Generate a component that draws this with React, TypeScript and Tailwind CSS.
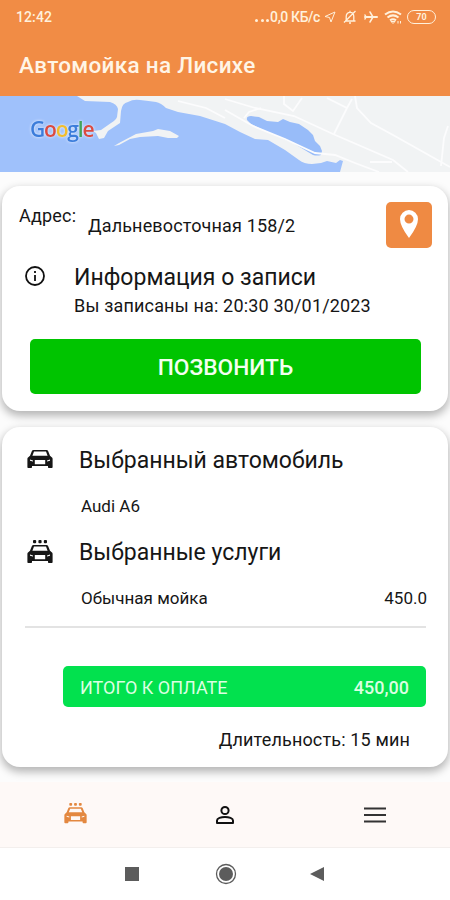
import type { ReactNode } from 'react'

interface CarProps {
  className?: string
  wash?: boolean
}

function CarIcon({ className, wash = false }: CarProps) {
  return (
    <svg viewBox="0 0 26 26" className={className} fill="currentColor">
      {wash && (
        <>
          <rect x="6" y="1" width="3.200" height="3.200" rx="1" />
          <rect x="11.400" y="1" width="3.200" height="3.200" rx="1" />
          <rect x="16.800" y="1" width="3.200" height="3.200" rx="1" />
        </>
      )}
      <path
        fillRule="evenodd"
        d="M6.600 6h12.800c.9 0 1.500.4 1.800 1.200L23 11.700l2 1.800c.4.4.6.8.6 1.400V23c0 .6-.4 1-1 1h-2.600c-.6 0-1-.4-1-1v-1H5v1c0 .6-.4 1-1 1H1.400c-.6 0-1-.4-1-1v-8.100c0-.6.2-1 .6-1.400l2-1.800 1.800-4.500C5.100 6.400 5.700 6 6.600 6zM7 7.500 5.400 11.700h15.200L19 7.500zM3 15.500v1.300l3 .7v-1.100zm20 0-3 .9v1.100l3-.7zM7.800 16v4.300h10.400V16z"
      />
    </svg>
  )
}

function StatusBar() {
  return (
    <div className="flex h-[34px] items-center justify-between pl-4 pr-[14px] text-[14px] font-medium text-[#fff1dc]">
      <span className="tracking-[0.1px]">12:42</span>
      <div className="flex items-center">
        <span className="mr-[1px] flex gap-[2.500px] pt-[7px]">
          <i className="size-[3px] rounded-full bg-current" />
          <i className="size-[3px] rounded-full bg-current" />
          <i className="size-[3px] rounded-full bg-current" />
        </span>
        <span className="text-[14px] tracking-[-0.4px]">0,0 КБ/с</span>
        <svg viewBox="0 0 12 12" className="ml-1 size-3" fill="none" stroke="currentColor" strokeWidth="1">
          <path d="M1 5.500 11 1 7 11 5.500 6.500z" strokeLinejoin="round" />
        </svg>
        <svg viewBox="0 0 14 14" className="ml-[7px] size-[14px]" fill="none" stroke="currentColor" strokeWidth="1.300">
          <path d="M2 11h10.500M3.200 11V6.500C3.200 4 4.800 2.300 7 2.300S10.800 4 10.800 6.500V11M6 13h2M7 .8v1.500M1 12.500 12.500 1" />
        </svg>
        <svg viewBox="0 0 16 14" className="ml-[6px] h-[14px] w-4" fill="none" stroke="currentColor" strokeWidth="2" strokeLinecap="round">
          <path d="M2 7h12" />
          <path d="m7 2 3 5-3 5M2 5l1 2-1 2" strokeWidth="1.500" />
        </svg>
        <svg viewBox="0 0 18 14" className="ml-[5px] h-[14px] w-[18px]" fill="none" stroke="currentColor" strokeWidth="2.100">
          <path d="M1 4.500q8-6 16 0M3.500 7.500q5.500-4.200 11 0M6 10.300q3-2.200 6 0" />
          <path d="m9 13.500 2-2H7zM14 11v2.500M16.500 11v2.500" strokeWidth="1" />
        </svg>
        <span className="ml-[5px] flex h-[14px] w-[29px] items-center justify-center rounded-full border border-[#fff1dc] text-[9px] font-bold leading-none">
          70
        </span>
      </div>
    </div>
  )
}

const googleLetters = [
  { char: 'G', color: 'text-[#3c7ddb]' },
  { char: 'o', color: 'text-[#dc4a40]' },
  { char: 'o', color: 'text-[#f2bd2c]' },
  { char: 'g', color: 'text-[#3c7ddb]' },
  { char: 'l', color: 'text-[#42a45b]' },
  { char: 'e', color: 'text-[#dc4a40]' },
]

function MapPreview() {
  return (
    <div className="relative h-[76px]">
      <svg viewBox="0 0 450 76" className="block h-[76px] w-[450px]">
        <rect width="450" height="76" fill="#f1f3f4" />
        <path
          fill="#9fc1fb"
          d="M0 0h77l8 5 25 1q7 2 8 7l-1 8q-1 3-6 6l-10 7-8 1 3 2 3 6 5-1 4-7 12-8 1-12q1-8 7-9 5-3 12-2 9 1 16 2 5 1 10 6l12 4 22 4 25 8 15 8 15 7 13 1 17 10 14 10q5 4 13 4l9-1 6-2 9 2 4-3 3 1-3 11H0z"
        />
        <path
          fill="#f1f3f4"
          d="m114 50 5-3 17-9 17-3 5-2 12 2 9 5-2 2h-9l-10-2-18 1-10 2-11 6z"
        />
        <path
          fill="#98bcf9"
          d="M247 24q-1-4 4-4l8 1 8 4 11 1 5-3 7 3 9 2 9 6 5 5 2 6 5 5 2 5-1 4q-4 1-8 0l-20-12-25-11-17-8z"
        />
        <g fill="none" stroke="#fcfcfd" strokeWidth="1.800">
          <path d="M178 5l28 7 19 10M225 3l30 9 39 8 39 18 60 26 15 12" />
          <path d="m225 14 28 16 32 13 30 14 20 2 20 8 24 9M244 22l5-6 12-4M355 0l2 12 14 15 22 12 57 32" />
          <path d="M284 0v8l9 7 9-13M327 2l20 10 5-9M347 12l-13 26M448 30l-4 12-3 28M370 66h22" />
        </g>
      </svg>
      <span className="absolute left-[30px] top-[20px] font-['Open_Sans',sans-serif] text-[21px] font-semibold leading-[26px] tracking-[-1.2px] drop-shadow-[0_0_1.500px_#f4f8ff]">
        {googleLetters.map((letter, index) => (
          <span key={index} className={letter.color}>{letter.char}</span>
        ))}
      </span>
    </div>
  )
}

function Card({ className, children }: { className: string; children: ReactNode }) {
  return (
    <section className={`mx-[2px] shrink-0 rounded-[18px] bg-white shadow-[0_4px_9px_1px_rgba(0,0,0,0.28)] ${className}`}>
      {children}
    </section>
  )
}

function BookingCard() {
  return (
    <Card className="mt-[14px] h-[225px]">
      <div className="flex h-[67px] pl-[17px] pr-[16px]">
        <span className="mt-[18px] w-[69px] text-[18px] leading-6 tracking-[0.2px]">Адрес:</span>
        <span className="mt-[28px] flex-1 whitespace-nowrap text-[18px] leading-6 tracking-[0.15px]">Дальневосточная 158/2</span>
        <button className="mt-[16px] flex size-[46px] items-center justify-center rounded-[5px] bg-[#ef8a43]">
          <svg viewBox="0 0 18 28" className="-mt-[2px] h-[28px] w-[18px]">
            <path fill="#fff" fillRule="evenodd" d="M9 0a9 9 0 0 0-9 9q0 7 9 19 9-12 9-19a9 9 0 0 0-9-9zm0 4.600a4.500 4.500 0 1 1 0 9 4.500 4.500 0 0 1 0-9z" />
          </svg>
        </button>
      </div>
      <div className="flex pl-[23px] pt-[9px]">
        <svg viewBox="0 0 20 20" className="mt-[4px] size-5" fill="none" stroke="#111" strokeWidth="1.800">
          <circle cx="10" cy="10" r="9" />
          <path d="M10 9v6M10 5v2" />
        </svg>
        <div className="ml-[29px] whitespace-nowrap">
          <h2 className="pt-px text-[23px] leading-[30px]">Информация о записи</h2>
          <p className="text-[18px] leading-[25px] tracking-[0.17px]">Вы записаны на: 20:30 30/01/2023</p>
        </div>
      </div>
      <button className="ml-[28px] mt-[21px] h-[55px] w-[391px] rounded-[5px] bg-[#00c400] pt-[4px] text-[22.700px] font-medium text-[#f3fff0]">
        ПОЗВОНИТЬ
      </button>
    </Card>
  )
}

function OrderCard() {
  return (
    <Card className="mt-[16px] h-[340px]">
      <div className="flex h-[67px] items-center pl-[25px]">
        <CarIcon className="-mt-[7px] size-[26px]" />
        <h2 className="ml-[26px] whitespace-nowrap text-[23px] leading-8">Выбранный автомобиль</h2>
      </div>
      <p className="ml-[79px] text-[17px] leading-6">Audi A6</p>
      <div className="mt-[19px] flex h-8 items-center pl-[25px]">
        <CarIcon wash className="-mt-[2px] size-[26px]" />
        <h2 className="ml-[26px] whitespace-nowrap text-[23px] leading-8">Выбранные услуги</h2>
      </div>
      <div className="mt-[17px] flex justify-between pl-[79px] pr-[21px] text-[17px] leading-6">
        <span>Обычная мойка</span>
        <span>450.0</span>
      </div>
      <div className="ml-[23px] mr-[22px] mt-[16px] h-[2px] bg-[#e3e3e3]" />
      <div className="ml-[61px] mr-[22px] mt-[38px] flex h-[41px] items-center justify-between rounded-[5px] bg-[#02e14e] px-[17px] pt-[2px] text-[18px] text-[#dcffe2]">
        <span>ИТОГО К ОПЛАТЕ</span>
        <span className="font-medium">450,00</span>
      </div>
      <p className="mr-[38px] mt-[21px] text-right text-[18px] leading-6 tracking-[0.150px]">Длительность: 15 мин</p>
    </Card>
  )
}

export default function App() {
  return (
    <div className="flex h-[900px] w-[450px] flex-col overflow-hidden bg-[#fcfcfc] font-[Roboto,sans-serif] text-[#161616]">
      <header className="h-[96px] shrink-0 bg-[#f18c45]">
        <StatusBar />
        <h1 className="pl-[19px] pt-[15px] text-[22.500px] font-medium leading-8 tracking-[0.3px] text-[#fff5e6]">Автомойка на Лисихе</h1>
      </header>
      <MapPreview />
      <BookingCard />
      <OrderCard />
      <nav className="mt-[15px] grid h-[66px] shrink-0 grid-cols-3 place-items-center border-b border-[#f3efed] bg-[#fef9f7]">
        <CarIcon wash className="mt-[-2px] size-[23px] text-[#e38840]" />
        <svg viewBox="0 0 20 20" className="size-5" fill="none" stroke="#111" strokeWidth="2">
          <circle cx="10" cy="5.500" r="3.600" />
          <path d="M2 18v-2.500c0-2.200 4-3.500 8-3.500s8 1.300 8 3.500V18z" strokeLinejoin="round" />
        </svg>
        <svg viewBox="0 0 22 18" className="h-[18px] w-[22px]" stroke="#333" strokeWidth="2">
          <path d="M0 2.500h22M0 9h22M0 15.500h22" />
        </svg>
      </nav>
      <div className="flex flex-1 items-center bg-white">
        <span className="ml-[125px] size-[14px] bg-[#5c5c5c]" />
        <svg viewBox="0 0 22 22" className="ml-[76px] size-[22px]">
          <circle cx="11" cy="11" r="9.500" fill="none" stroke="#5c5c5c" strokeWidth="1.300" />
          <circle cx="11" cy="11" r="7" fill="#5c5c5c" />
        </svg>
        <svg viewBox="0 0 14 16" className="ml-[73px] h-4 w-[14px]" fill="#5c5c5c">
          <path d="M0 8 14 1v14z" />
        </svg>
      </div>
    </div>
  )
}
